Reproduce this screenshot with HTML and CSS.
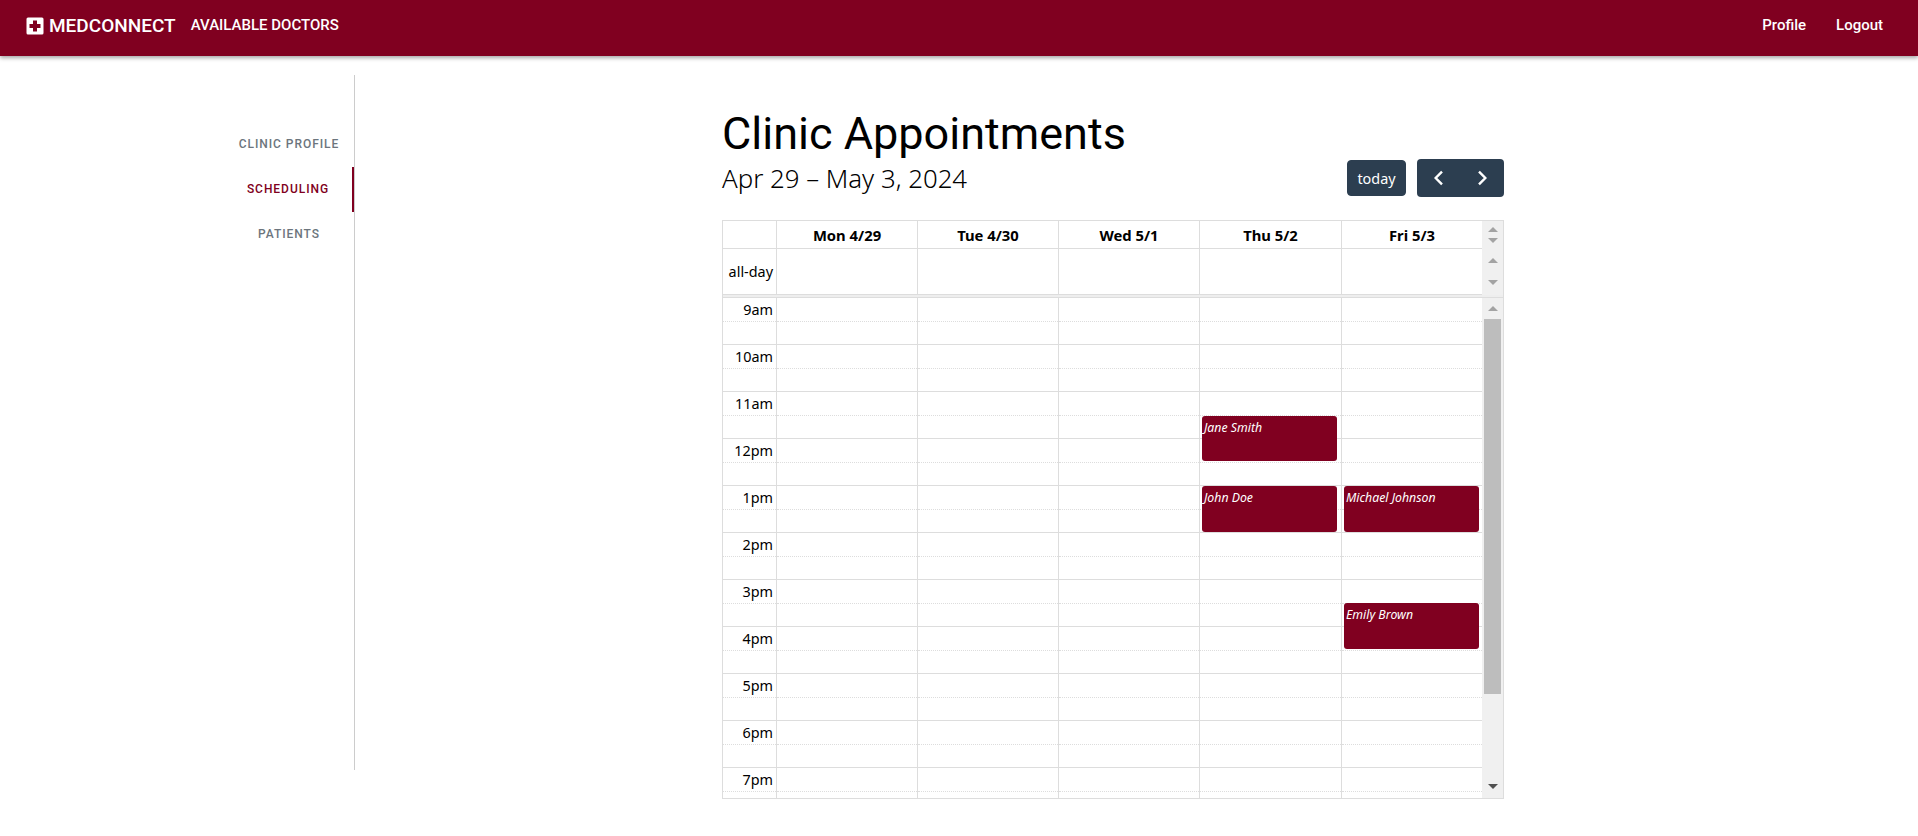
FILE: index.html
```html
<!DOCTYPE html>
<html lang="en">
<head>
<meta charset="utf-8">
<title>Clinic Appointments</title>
<link rel="stylesheet" href="styles.css">
</head>
<body>
<header class="navbar">
  <a class="brand">
    <svg class="brand-icon" viewBox="0 0 18 18" width="18" height="18"><path fill="#fff" fill-rule="evenodd" d="M2 0.5h14a1.5 1.5 0 0 1 1.5 1.5v14a1.5 1.5 0 0 1-1.5 1.5H2A1.5 1.5 0 0 1 .5 16V2A1.5 1.5 0 0 1 2 .5zM7 3.5v3.5H3.5v4H7v3.5h4V11h3.5V7H11V3.5z"/></svg>
    <span>MEDCONNECT</span>
  </a>
  <a class="nav-link">AVAILABLE DOCTORS</a>
  <nav class="nav-right">
    <a class="nav-action">Profile</a>
    <a class="nav-action">Logout</a>
  </nav>
</header>
<div class="page">
  <aside class="sidebar">
    <a class="side-item">CLINIC PROFILE</a>
    <a class="side-item active">SCHEDULING</a>
    <a class="side-item">PATIENTS</a>
  </aside>
  <main class="main">
    <h1 class="title">Clinic Appointments</h1>
    <div class="toolbar">
      <h2 class="range">Apr 29 – May 3, 2024</h2>
      <div class="tools">
        <button class="btn-today">today</button>
        <div class="btn-group">
          <button class="btn-nav"><svg viewBox="0 0 12 16" width="12" height="16"><path d="M9 1.7 2.7 8 9 14.3" fill="none" stroke="#fff" stroke-width="2.4"/></svg></button>
          <button class="btn-nav"><svg viewBox="0 0 12 16" width="12" height="16"><path d="M3 1.7 9.300 8 3 14.3" fill="none" stroke="#fff" stroke-width="2.4"/></svg></button>
        </div>
      </div>
    </div>
    <section class="calendar">
      <div class="row head">
        <div class="cell"></div>
        <div class="cell">Mon 4/29</div>
        <div class="cell">Tue 4/30</div>
        <div class="cell">Wed 5/1</div>
        <div class="cell">Thu 5/2</div>
        <div class="cell last">Fri 5/3</div>
        <div class="sb sb-head">
          <svg class="arr" viewBox="0 0 10 5" width="10" height="5"><path d="M5 0 10 5H0z"/></svg>
          <svg class="arr" viewBox="0 0 10 5" width="10" height="5"><path d="M0 0H10L5 5z"/></svg>
        </div>
      </div>
      <div class="row allday">
        <div class="cell label">all-day</div>
        <div class="cell"></div>
        <div class="cell"></div>
        <div class="cell"></div>
        <div class="cell"></div>
        <div class="cell last"></div>
        <div class="sb sb-allday">
          <svg class="arr" viewBox="0 0 10 5" width="10" height="5"><path d="M5 0 10 5H0z"/></svg>
          <svg class="arr" viewBox="0 0 10 5" width="10" height="5"><path d="M0 0H10L5 5z"/></svg>
        </div>
      </div>
      <div class="divider"></div>
      <div class="row timeline">
        <div class="col axis">
          <div class="hour"><div class="half">9am</div></div>
          <div class="hour"><div class="half">10am</div></div>
          <div class="hour"><div class="half">11am</div></div>
          <div class="hour"><div class="half">12pm</div></div>
          <div class="hour"><div class="half">1pm</div></div>
          <div class="hour"><div class="half">2pm</div></div>
          <div class="hour"><div class="half">3pm</div></div>
          <div class="hour"><div class="half">4pm</div></div>
          <div class="hour"><div class="half">5pm</div></div>
          <div class="hour"><div class="half">6pm</div></div>
          <div class="hour"><div class="half">7pm</div></div>
        </div>
        <div class="col">
          <div class="hour"><div class="half"></div></div><div class="hour"><div class="half"></div></div><div class="hour"><div class="half"></div></div><div class="hour"><div class="half"></div></div><div class="hour"><div class="half"></div></div><div class="hour"><div class="half"></div></div><div class="hour"><div class="half"></div></div><div class="hour"><div class="half"></div></div><div class="hour"><div class="half"></div></div><div class="hour"><div class="half"></div></div><div class="hour"><div class="half"></div></div>
        </div>
        <div class="col">
          <div class="hour"><div class="half"></div></div><div class="hour"><div class="half"></div></div><div class="hour"><div class="half"></div></div><div class="hour"><div class="half"></div></div><div class="hour"><div class="half"></div></div><div class="hour"><div class="half"></div></div><div class="hour"><div class="half"></div></div><div class="hour"><div class="half"></div></div><div class="hour"><div class="half"></div></div><div class="hour"><div class="half"></div></div><div class="hour"><div class="half"></div></div>
        </div>
        <div class="col">
          <div class="hour"><div class="half"></div></div><div class="hour"><div class="half"></div></div><div class="hour"><div class="half"></div></div><div class="hour"><div class="half"></div></div><div class="hour"><div class="half"></div></div><div class="hour"><div class="half"></div></div><div class="hour"><div class="half"></div></div><div class="hour"><div class="half"></div></div><div class="hour"><div class="half"></div></div><div class="hour"><div class="half"></div></div><div class="hour"><div class="half"></div></div>
        </div>
        <div class="col">
          <div class="hour"><div class="half"></div></div><div class="hour"><div class="half"></div></div><div class="hour"><div class="half"></div></div><div class="hour"><div class="half"></div></div><div class="hour"><div class="half"></div></div><div class="hour"><div class="half"></div></div><div class="hour"><div class="half"></div></div><div class="hour"><div class="half"></div></div><div class="hour"><div class="half"></div></div><div class="hour"><div class="half"></div></div><div class="hour"><div class="half"></div></div>
          <div class="event ev-jane">Jane Smith</div>
          <div class="event ev-john">John Doe</div>
        </div>
        <div class="col last">
          <div class="hour"><div class="half"></div></div><div class="hour"><div class="half"></div></div><div class="hour"><div class="half"></div></div><div class="hour"><div class="half"></div></div><div class="hour"><div class="half"></div></div><div class="hour"><div class="half"></div></div><div class="hour"><div class="half"></div></div><div class="hour"><div class="half"></div></div><div class="hour"><div class="half"></div></div><div class="hour"><div class="half"></div></div><div class="hour"><div class="half"></div></div>
          <div class="event ev-michael">Michael Johnson</div>
          <div class="event ev-emily">Emily Brown</div>
        </div>
        <div class="sb sb-body">
          <div class="sb-btn"><svg class="arr" viewBox="0 0 10 5" width="10" height="5"><path d="M5 0 10 5H0z"/></svg></div>
          <div class="thumb"></div>
          <div class="sb-btn down"><svg class="arr dark" viewBox="0 0 10 5" width="10" height="5"><path d="M0 0H10L5 5z"/></svg></div>
        </div>
      </div>
    </section>
  </main>
</div>
</body>
</html>
```
FILE: styles.css
```css
* { box-sizing: border-box; }
html, body { margin: 0; padding: 0; height: 100%; overflow: hidden; }
body { background: #fff; color: #000; font-family: Roboto, sans-serif; }

.navbar {
  height: 56px;
  background: #800020;
  color: #fff;
  display: flex;
  align-items: center;
  padding: 0 35px 6px 26px;
  box-shadow: 0 2px 4px rgba(0,0,0,.35);
}
.brand { display: flex; align-items: center; gap: 5px; font-size: 19px; font-weight: 500; }
.brand-icon { display: block; margin-top: 2px; }
.nav-link { margin-left: 15px; font-size: 15px; font-weight: 500; }
.nav-right { margin-left: auto; display: flex; gap: 30px; }
.nav-action { font-size: 15px; font-weight: 500; }

.page { display: flex; padding-top: 19px; }
.sidebar {
  width: 355px;
  height: 695px;
  padding: 47px 0 0 224px;
  border-right: 1px solid #ccc;
  display: flex;
  flex-direction: column;
}
.side-item {
  height: 45px;
  padding-bottom: 2px;
  display: flex;
  align-items: center;
  justify-content: center;
  font-size: 12px;
  font-weight: 500;
  letter-spacing: .08em;
  color: #6c757d;
}
.side-item.active { color: #800020; border-right: 2px solid #800020; }

.main { padding: 33px 0 0 367px; width: 1149px; }
.title { margin: 0; font-size: 45px; font-weight: 400; line-height: 51px; font-family: Roboto, sans-serif; }
.toolbar { display: flex; justify-content: space-between; align-items: center; height: 38px; margin: 0 0 23px; }
.range { margin: 0; font-family: "Noto Sans", sans-serif; font-size: 25.8px; font-weight: 300; line-height: 38px; }
.tools { display: flex; align-items: center; gap: 11px; }
.btn-today {
  width: 59px; height: 36px; padding: 0;
  background: #2c3e50; border: 1px solid #2c3e50; border-radius: 4px;
  color: #fff; font: 400 14.4px "Noto Sans", sans-serif;
}
.btn-group { display: flex; width: 87px; height: 38px; background: #2c3e50; border-radius: 4px; }
.btn-nav {
  flex: 1; padding: 0; background: none; border: 0;
  display: flex; align-items: center; justify-content: center;
}

.calendar {
  width: 782px;
  border: 1px solid #ddd;
  font-family: "Noto Sans", sans-serif;
  font-size: 14.4px;
}
.row { display: grid; grid-template-columns: 54px 141px 141px 141px 142px 140px 21px; }
.cell { border-right: 1px solid #ddd; border-bottom: 1px solid #ddd; display: flex; align-items: center; justify-content: center; }
.cell.last { border-right: 0; }
.head { height: 28px; font-weight: 700; font-size: 14.8px; }
.allday { height: 46px; }
.cell.label { justify-content: flex-end; padding-right: 3px; }
.divider { height: 3px; background: #eee; border-bottom: 1px solid #ddd; }
.timeline { height: 500px; overflow: hidden; }
.col { position: relative; border-right: 1px solid #ddd; }
.col.last { border-right: 0; }
.hour { height: 47px; border-bottom: 1px solid #ddd; }
.half { height: 24px; border-bottom: 1px dotted #ddd; line-height: 24px; }
.axis .half { text-align: right; padding-right: 3px; }

.event {
  position: absolute;
  left: 2px;
  width: 135px;
  background: #800020;
  border-radius: 3px;
  color: #fff;
  font-size: 12.3px;
  font-style: italic;
  line-height: 18px;
  padding: 3px 0 0 2px;
}
.ev-jane { top: 118px; height: 45px; }
.ev-john { top: 188px; height: 46px; }
.ev-michael { top: 188px; height: 46px; }
.ev-emily { top: 305px; height: 46px; }

.sb { background: #f0f0f0; display: flex; flex-direction: column; align-items: center; }
.arr { display: block; fill: #a3a3a3; }
.arr.dark { fill: #505050; }
.sb-head { padding-top: 6px; gap: 6px; }
.sb-allday { justify-content: space-between; padding: 9px 0 10px; }
.sb-body { height: 500px; }
.sb-btn { height: 21px; display: flex; align-items: center; justify-content: center; }
.thumb { width: 17px; height: 375px; background: #bdbdbd; flex: none; }
.sb-btn.down { margin-top: auto; height: 24px; }
```
